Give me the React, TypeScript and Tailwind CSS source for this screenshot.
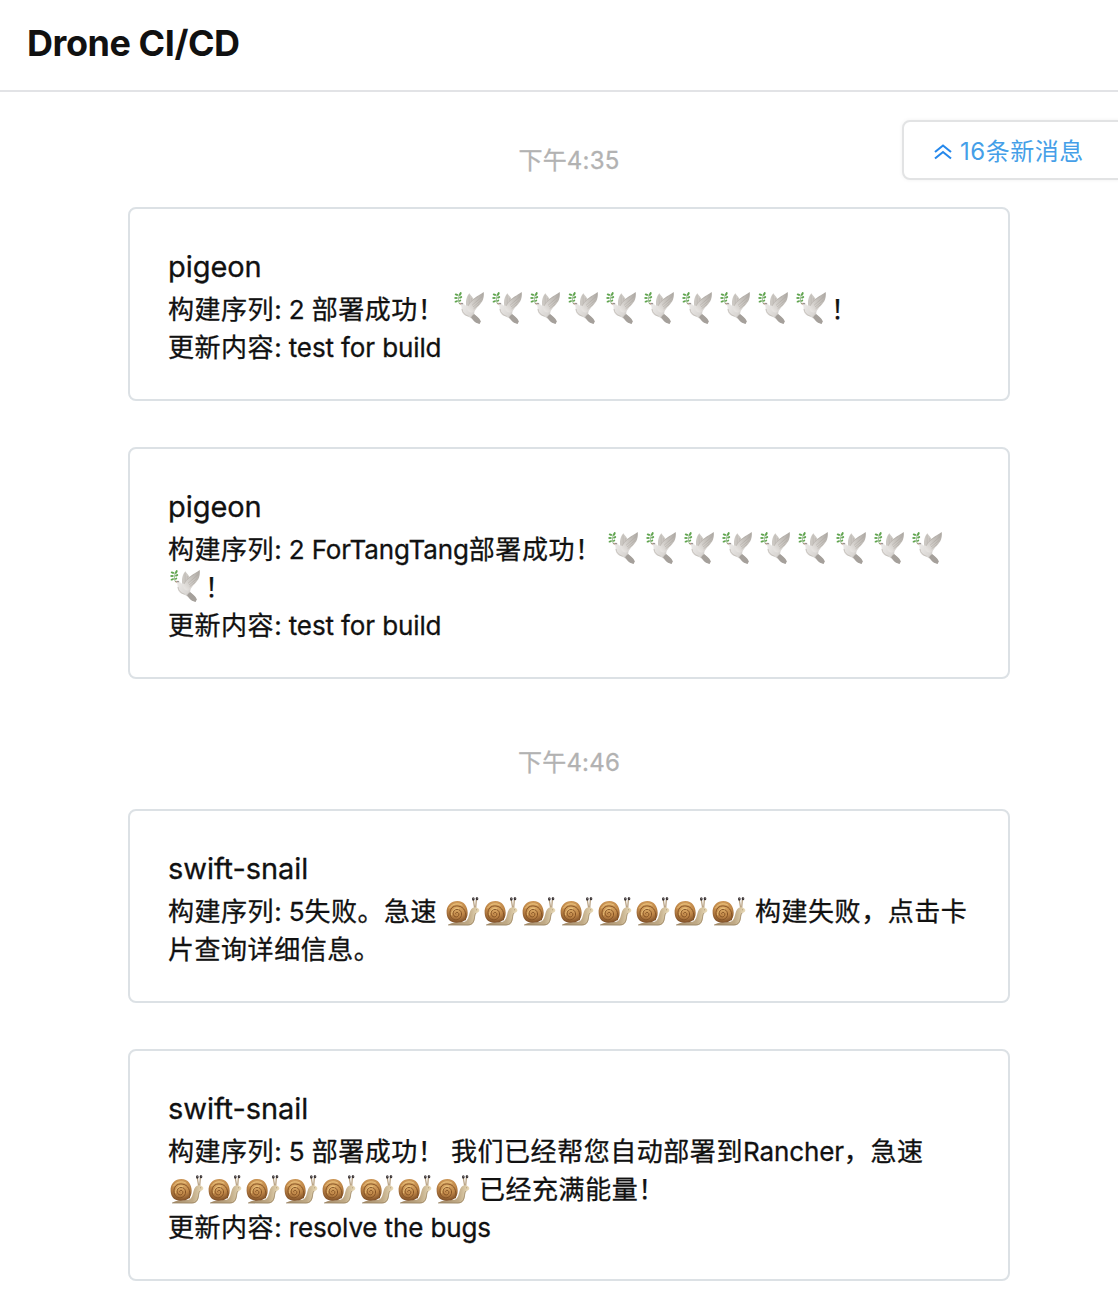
import React from "react";

function Dove() {
  return (
    <svg viewBox="0 0 90 96" className="relative -top-0.5 ml-0.5 mr-1.5 h-8 w-[30px] shrink-0" aria-hidden="true">
      <defs>
        <linearGradient id="dove-wing" x1="1" y1="0" x2="0.1" y2="0.9">
          <stop offset="0" stopColor="#aaa59f" />
          <stop offset="0.5" stopColor="#c6c2bd" />
          <stop offset="1" stopColor="#e6e3e0" />
        </linearGradient>
        <linearGradient id="dove-body" x1="0" y1="0.2" x2="1" y2="1">
          <stop offset="0" stopColor="#eceae8" />
          <stop offset="0.5" stopColor="#dad7d4" />
          <stop offset="1" stopColor="#a39e99" />
        </linearGradient>
      </defs>
      <path d="M37 42 C34 28 38 13 46 4 C50 11 59 17 61 27 L56 46Z" fill="#ccc8c3" />
      <path d="M45 10 L46 40 M52 18 L52 38" stroke="#b3aea8" strokeWidth="1.5" fill="none" />
      <path d="M17 33 C22 29 28 31 31 37 C34 43 40 42 47 38 L62 56 C61 61 60 64 61 67 C66 72 75 77 80 88 L77 95 C70 95 62 91 58 85 C53 78 46 77 41 73 C28 70 22 60 23 50 C23 43 21 38 17 36Z" fill="url(#dove-body)" />
      <path d="M42 42 C54 18 73 12 89 0 C91 14 87 26 81 33 C76 41 70 45 66 51 C61 59 54 64 47 60 C40 57 38 49 42 42Z" fill="url(#dove-wing)" />
      <path d="M42 42 C50 27 61 20 72 13 M54 40 L85 13 M57 45 L82 25 M59 50 L76 36" stroke="#aaa59f" strokeWidth="1.5" fill="none" />
      <path d="M51 76 C56 70 58 68 61 67 C66 72 75 77 80 88 L77 95 C69 94 62 91 58 85Z" fill="#a5a09b" />
      <path d="M24 51 C25 62 32 69 44 73" stroke="#c2bdb7" strokeWidth="2.5" fill="none" />
      <path d="M14 35 L21 33 L20 38Z" fill="#b58676" />
      <circle cx="24" cy="35" r="2" fill="#4c4545" />
      <path d="M17 36 C12 29 12 20 17 5" stroke="#6c995f" strokeWidth="2" fill="none" />
      <g fill="#61a550">
        <ellipse cx="19" cy="6" rx="3" ry="6" transform="rotate(25 19 6)" />
        <ellipse cx="8" cy="8" rx="6" ry="3" transform="rotate(15 8 8)" />
        <ellipse cx="20" cy="16" rx="5" ry="3" transform="rotate(-25 20 16)" />
        <ellipse cx="6" cy="18" rx="5.5" ry="3" />
        <ellipse cx="7" cy="28" rx="5.5" ry="3" transform="rotate(-20 7 28)" />
        <ellipse cx="18" cy="26" rx="4" ry="2.5" transform="rotate(-30 18 26)" />
      </g>
    </svg>
  );
}

function Snail() {
  return (
    <svg viewBox="0 0 100 87" className="relative top-[-1px] ml-0.5 mr-[2px] h-[29px] w-[34px] shrink-0" aria-hidden="true">
      <defs>
        <radialGradient id="snail-shell" cx="0.5" cy="0.3" r="0.75">
          <stop offset="0" stopColor="#e0b06c" />
          <stop offset="0.55" stopColor="#c08748" />
          <stop offset="1" stopColor="#744622" />
        </radialGradient>
        <linearGradient id="snail-skin" x1="0" y1="0" x2="1" y2="0">
          <stop offset="0" stopColor="#a58c6b" />
          <stop offset="0.65" stopColor="#c0aa86" />
          <stop offset="1" stopColor="#eadcba" />
        </linearGradient>
      </defs>
      <path d="M81 9 L85 33 M90 9 L88 33" stroke="#baa485" strokeWidth="4" fill="none" />
      <path d="M5 84 C18 74 34 76 52 75 C64 72 66 62 69 50 C72 37 78 30 87 31 C94 32 100 36 99 41 C98 46 91 46 88 50 C84 57 87 67 82 76 C78 84 72 85 63 85Z" fill="url(#snail-skin)" />
      <path d="M5 84 H65 C76 84 81 77 83 69 C86 60 84 54 89 48" stroke="#8f7858" strokeWidth="2" fill="none" />
      <path d="M1 49 C-1 25 15 12 33 12 C54 12 63 28 64 47 C64 68 51 77 31 77 C12 77 2 67 1 49Z" fill="url(#snail-shell)" />
      <path d="M57 70 C62 47 54 29 35 27 C19 25 9 37 11 52 C13 68 30 73 40 64 C51 54 45 37 32 37 C19 37 17 54 26 59 C34 63 42 52 35 47 C30 44 26 49 29 52" stroke="#865425" strokeWidth="3" fill="none" />
      <path d="M9 34 C19 18 37 18 48 25 M16 55 C14 39 29 31 38 36" stroke="#eec983" strokeWidth="2.5" fill="none" />
      <ellipse cx="81" cy="6" rx="4" ry="5" fill="#3b3435" />
      <ellipse cx="92" cy="5" rx="4" ry="5" fill="#3b3435" />
      <circle cx="82" cy="4" r="1.3" fill="#c8c4c4" />
      <circle cx="93" cy="3" r="1.3" fill="#c8c4c4" />
      <circle cx="91" cy="38" r="1.6" fill="#a28a68" />
    </svg>
  );
}

function Repeat({ icon: Icon, count }: { icon: React.ComponentType; count: number }) {
  return (
    <span className="flex shrink-0 items-center">
      {Array.from({ length: count }, (_, i) => (
        <Icon key={i} />
      ))}
    </span>
  );
}

/* Chinese runs are spaced slightly wider than the Latin runs between them. */
function Mixed({ text, className = "" }: { text: string; className?: string }) {
  const runs = text.split(/([\u3000-\u9fff\uff00-\uffef]+)/).filter(Boolean);
  return (
    <span className={className}>
      {runs.map((run, i) => (
        <span key={i} className={/[\u3000-\uffef]/.test(run) ? "tracking-[0.54px]" : "tracking-[-0.12px]"}>
          {run}
        </span>
      ))}
    </span>
  );
}

function Line({ children }: { children: React.ReactNode }) {
  return <div className="flex h-[38px] items-center whitespace-pre">{children}</div>;
}

function Card({ title, children }: { title: string; children: React.ReactNode }) {
  return (
    <article className="w-[882px] rounded-lg border-2 border-[#dce1e5] bg-white px-[38px] pt-[38px] pb-8 [-webkit-text-stroke:0.3px]">
      <h2 className="h-11 text-[29px] leading-[40px] tracking-[-0.05px]">{title}</h2>
      <div className="text-[26px] leading-[38px]">{children}</div>
    </article>
  );
}

function Time({ children }: { children: React.ReactNode }) {
  return (
    <time className="block h-[34px] text-center text-[24px] leading-[36px] tracking-[0.2px] text-[#b2b2b2] [-webkit-text-stroke:0.3px]">
      {children}
    </time>
  );
}

export default function App() {
  return (
    <div className="relative h-[1314px] w-[1118px] overflow-hidden bg-white font-['Inter','Noto_Sans_CJK_SC',sans-serif] text-[#111]">
      <header className="h-[92px] border-b-2 border-[#e2e3e6] px-[27px]">
        <h1 className="text-[36px] leading-[86px] font-bold tracking-[-0.45px]">Drone CI/CD</h1>
      </header>
      <button className="absolute top-[120px] left-[902px] flex h-[60px] w-[224px] items-center rounded-lg border-2 border-[#e2e3e4] bg-white pl-[30px] text-[24px] text-[#459fe8] shadow-[0_0_4px_rgba(0,0,0,0.06)]">
        <svg viewBox="0 0 18 16" className="mt-1 mr-2 h-4 w-[18px]" fill="none" stroke="#2588ec" strokeWidth="2.1" aria-hidden="true">
          <path d="M1 8 L9 1.5 L17 8 M1 14.5 L9 8 L17 14.5" />
        </svg>
        <span className="pt-1 tracking-[0.5px] whitespace-nowrap">16条新消息</span>
      </button>
      <main className="flex flex-col pt-[51px] pr-[108px] pl-[128px]">
        <Time>下午4:35</Time>
        <div className="mt-[30px] flex flex-col gap-[46px]">
          <Card title="pigeon">
            <Line>
              <Mixed className="w-[284px]" text="构建序列: 2 部署成功！" />
              <Repeat icon={Dove} count={10} />
              <Mixed className="-ml-px" text="！" />
            </Line>
            <Line>
              <Mixed text="更新内容: test for build" />
            </Line>
          </Card>
          <Card title="pigeon">
            <Line>
              <Mixed className="w-[438px]" text="构建序列: 2 ForTangTang部署成功！" />
              <Repeat icon={Dove} count={9} />
            </Line>
            <Line>
              <Repeat icon={Dove} count={1} />
              <Mixed className="-ml-px" text="！" />
            </Line>
            <Line>
              <Mixed text="更新内容: test for build" />
            </Line>
          </Card>
        </div>
        <div className="mt-[66px]">
          <Time>下午4:46</Time>
        </div>
        <div className="mt-[30px] flex flex-col gap-[46px]">
          <Card title="swift-snail">
            <Line>
              <Mixed className="w-[276px]" text="构建序列: 5失败。急速" />
              <Repeat icon={Snail} count={8} />
              <Mixed className="pl-[7px]" text="构建失败，点击卡" />
            </Line>
            <Line>
              <Mixed text="片查询详细信息。" />
            </Line>
          </Card>
          <Card title="swift-snail">
            <Line>
              <Mixed className="w-[283px]" text="构建序列: 5 部署成功！" />
              <Mixed text="我们已经帮您自动部署到Rancher，急速" />
            </Line>
            <Line>
              <Repeat icon={Snail} count={8} />
              <Mixed className="pl-[7px]" text="已经充满能量！" />
            </Line>
            <Line>
              <Mixed text="更新内容: resolve the bugs" />
            </Line>
          </Card>
        </div>
      </main>
    </div>
  );
}
